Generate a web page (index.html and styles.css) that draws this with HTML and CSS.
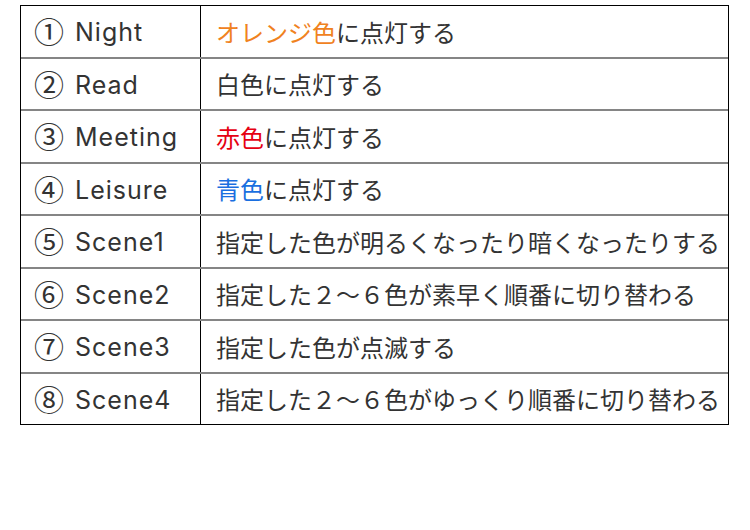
FILE: index.html
```html
<!DOCTYPE html>
<html lang="ja">
<head>
<meta charset="utf-8">
<link rel="stylesheet" href="styles.css">
</head>
<body>
<div class="table">
  <div class="row"><div class="name"><span class="num">①</span>Night</div><div class="desc"><span class="orange">オレンジ色</span>に点灯する</div></div>
  <div class="row"><div class="name"><span class="num">②</span>Read</div><div class="desc">白色に点灯する</div></div>
  <div class="row"><div class="name"><span class="num">③</span>Meeting</div><div class="desc"><span class="red">赤色</span>に点灯する</div></div>
  <div class="row"><div class="name"><span class="num">④</span>Leisure</div><div class="desc"><span class="blue">青色</span>に点灯する</div></div>
  <div class="row"><div class="name"><span class="num">⑤</span>Scene1</div><div class="desc">指定した色が明るくなったり暗くなったりする</div></div>
  <div class="row"><div class="name"><span class="num">⑥</span>Scene2</div><div class="desc">指定した２～６色が素早く順番に切り替わる</div></div>
  <div class="row"><div class="name"><span class="num">⑦</span>Scene3</div><div class="desc">指定した色が点滅する</div></div>
  <div class="row"><div class="name"><span class="num">⑧</span>Scene4</div><div class="desc">指定した２～６色がゆっくり順番に切り替わる</div></div>
</div>
</body>
</html>
```

FILE: styles.css
```css
html, body {
  margin: 0;
  padding: 0;
  background: #ffffff;
}
body {
  padding: 5px 0 0 20px;
  font-family: "Noto Sans CJK JP", "Noto Sans", sans-serif;
  font-size: 24px;
  color: #333333;
}
.table {
  width: 707px;
  border: 1px solid #000000;
  display: flex;
  flex-direction: column;
}
.row {
  display: flex;
  height: 50.5px;
  border-top: 2px solid #858585;
}
.row:first-child {
  border-top: none;
}
.name {
  width: 180px;
  box-sizing: border-box;
  border-right: 1px solid #000000;
  padding: 1px 0 0 13px;
  font-family: Inter, "Noto Sans CJK JP", sans-serif;
  font-size: 25px;
  line-height: 50px;
  letter-spacing: 1px;
  white-space: nowrap;
}
.num {
  font-family: "Noto Sans CJK JP", sans-serif;
  font-size: 30px;
  letter-spacing: 0;
  margin-right: 11px;
  line-height: 1;
  vertical-align: -2px;
}
.desc {
  flex: 1;
  display: flex;
  align-items: center;
  padding-left: 15px;
  white-space: nowrap;
}
.orange { color: #f0821e; }
.red { color: #e60012; }
.blue { color: #1a6fe0; }
```
